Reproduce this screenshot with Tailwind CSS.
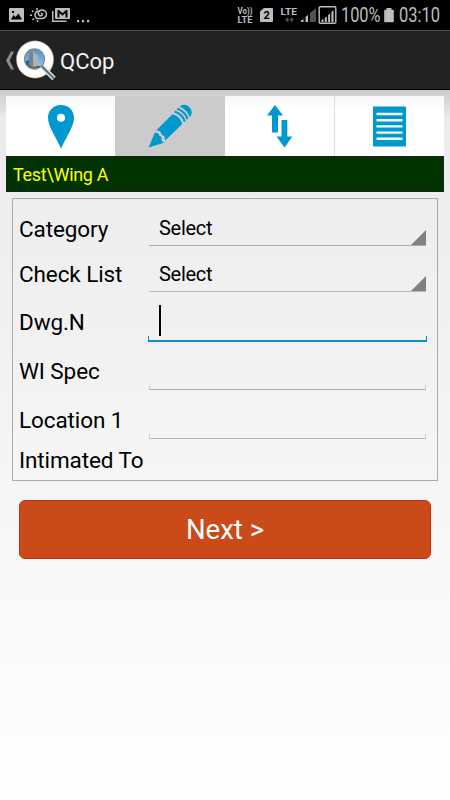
<!DOCTYPE html>
<html lang="en">
<head>
<meta charset="utf-8">
<title>QCop</title>
<script src="https://cdn.jsdelivr.net/npm/@tailwindcss/browser@4"></script>
</head>
<body class="w-[450px] h-[800px] overflow-hidden flex flex-col bg-white font-['Roboto',sans-serif] text-black">
<header class="h-[90px] shrink-0 flex flex-col bg-black">
  <div class="h-[30px] flex items-center justify-between text-[#bdbdbd]">
    <svg width="96" height="30" viewBox="0 0 96 30" fill="#bdbdbd">
      <path fill-rule="evenodd" d="M10 8h13q1 0 1 1v12q0 1-1 1h-13q-1 0-1-1v-12q0-1 1-1zM11 19.500h11l-3.500-6-3 3.500-2-2zM12 11v2h2v-2z"/>
      <g fill="none" stroke="#bdbdbd" stroke-width="1.500">
        <path d="M40 11.300a3.300 3.300 0 1 0-2.500 7.200h5a4.300 4.300 0 1 0-4-6.500c-.8 2.500 1 4 2.500 3.800 1.800-.3 1.700-2.500-.2-2.500"/>
        <path stroke-dasharray="2 2" d="M32 10.500l1.500 1.500M37 8v2M30 15.200h2.200M32.500 20l1.500-1.500M37.500 20v2"/>
      </g>
      <path d="M52 11h1.500v9.500h13V22H52z"/>
      <path fill-rule="evenodd" d="M56 8h13q1 0 1 1v9q0 1-1 1h-13q-1 0-1-1v-9q0-1 1-1zM57.500 10v7.500h2v-4.500l3 2.700 3-2.700v4.500h2v-7.500h-1.500l-3.500 3-3.500-3z"/>
      <path d="M77 20h2.200v2.200H77zM82 20h2.200v2.200H82zM87 20h2.200v2.200H87z"/>
    </svg>
    <svg width="218" height="30" viewBox="232 0 218 30" fill="#bdbdbd" font-family="Roboto, sans-serif">
      <g font-weight="700">
        <text x="237.500" y="14" font-size="8.500" textLength="15" lengthAdjust="spacingAndGlyphs">Vo))</text>
        <text x="237.500" y="22.700" font-size="8.500" textLength="15" lengthAdjust="spacingAndGlyphs">LTE</text>
        <path d="M264 8h8q1 0 1 1v12q0 1-1 1h-11q-1 0-1-1v-9.500z"/>
        <text x="263.500" y="19.300" font-size="11" fill="#000">2</text>
        <text x="280.500" y="15" font-size="9.500" textLength="16.500" lengthAdjust="spacingAndGlyphs">LTE</text>
      </g>
      <path fill="#555" d="M287.300 22l-2.500-2.500h1.700V17.500h1.600v2h1.700zM291.800 17.500l2.300 2.500h-1.600v2h-1.600v-2h-1.600z"/>
      <path d="M301 22v-1.500l2.500-1.500v3zM305.500 22v-5l2.500-2V22z"/>
      <path fill="#505050" d="M310 22v-9l6-5v14z"/>
      <rect x="319.200" y="6.700" width="16.600" height="16.500" rx="1" fill="none" stroke="#bdbdbd" stroke-width="1.400"/>
      <path d="M321.500 22v-2l2-1v3zM324.800 22v-4l2-1.500V22zM328.100 22v-7l2-1.500V22zM331.400 22V12l2.100-2v12z"/>
      <text x="341" y="22.200" font-size="20" textLength="39.500" lengthAdjust="spacingAndGlyphs">100%</text>
      <path d="M386.500 8h5v1.700h1.500q.8 0 .8.800v11q0 .8-.8.800h-8q-.8 0-.8-.8v-11q0-.8.800-.8h1.500z"/>
      <text x="399" y="22.200" font-size="20" textLength="41" lengthAdjust="spacingAndGlyphs">03:10</text>
    </svg>
  </div>
  <div class="h-[59px] border-t border-[#4a4a4a] bg-[#222] flex items-center">
    <svg class="shrink-0" width="59" height="58" viewBox="0 31 59 58">
      <defs>
        <linearGradient id="sky" x2="0" y2="1"><stop stop-color="#4f8fc8"/><stop offset="1" stop-color="#9ccbea"/></linearGradient>
        <clipPath id="lens"><circle cx="34.500" cy="59" r="9.500"/></clipPath>
      </defs>
      <path d="M11 51.500h3l-4.300 9 4.300 9h-3l-5-9z" fill="#8c8c8c"/>
      <circle cx="35" cy="59.500" r="18.700" fill="#fff" stroke="#9a6a42" stroke-width=".5"/>
      <path d="M42 66.500l12 12" stroke="#dededb" stroke-width="5"/>
      <path d="M41.500 66l12.500 12.500" stroke="#477184" stroke-width="1.800"/>
      <circle cx="34.500" cy="59" r="10" fill="url(#sky)" stroke="#7e8d97" stroke-width="1.300"/>
      <g clip-path="url(#lens)"><path d="M24 62l5-2v8h-5z" fill="#1769a6"/><path d="M29 70V56q1-4 4-5 5 4 5 19z" fill="#77838c"/><path d="M33 70V51l5 5 1 14z" fill="#a7b3bd"/><path d="M24 66h22v4H24z" fill="#49503b"/><path d="M31 66h6v1.500h-6z" fill="#a78455"/></g>
    </svg>
    <h1 class="text-[22px] leading-7 text-[#f3f3f3] pl-[1px] pt-[3px]">QCop</h1>
  </div>
</header>
<main class="grow px-[6px] pt-[6px] bg-linear-to-b from-[#cbcbcb] from-0% via-[#ebebeb] via-[4%] to-white">
  <nav class="h-[60px] flex bg-linear-to-b from-[#f8f8f8] to-white to-25%">
    <div class="w-[109px] flex justify-center items-center"><svg width="28" height="46" viewBox="0 0 28 46"><path fill="#0099cf" fill-rule="evenodd" d="M14 2C6.500 2 1 7.500 1 14.500c0 9 7 18 13 31 6-13 13-22 13-31C27 7.500 21.500 2 14 2zM14 10.800a4 4 0 1 1 0 8 4 4 0 0 1 0-8z"/></svg></div>
    <div class="w-[110px] flex justify-center items-center bg-[#cbcbcb]"><svg width="46" height="46" viewBox="147 103 46 46"><path fill="#0099cf" d="M148.700 147.500l6-14.700c2.800-.6 4.500.8 4.700 3.200 2.200.5 2.700 2 2 4.600l2.600 2.200zM156.300 130.300L172.500 114.200c5.500 1.800 8.500 5 9.700 9.700L165 140.800c.2-3.500-.7-5.500-3.300-6-.2-2.500-2.200-4.400-5.400-4.500zM179.500 106.700c4.500-4.200 9.500-1 11.200 2.300 1.800 3.700 1 6.500-1.200 8-1.500-5-4.700-8.500-10-10.300z"/><path fill="none" stroke="#0099cf" stroke-width="2" d="M177.200 108.800c5.300 1.700 8.700 5 10.300 10.300M174.500 111.500c5.300 1.700 8.700 5 10.300 10.300"/></svg></div>
    <div class="w-[109px] flex justify-center items-center"><svg width="28" height="46" viewBox="266 103 28 46" fill="#0099cf"><path d="M275 105l8 10.500h-5v17h-6v-17h-5zM281.500 120h5.800v16.500h5L284.500 147.500l-8-11h5z"/></svg></div>
    <div class="grow border-l border-[#dedede] flex justify-center items-center"><svg class="mr-[1px]" width="33" height="41" viewBox="0 0 33 41"><path fill="#0099cf" d="M0 .5h33v40H0z"/><path stroke="#f5fbfd" stroke-width="2.400" d="M3.500 8h26M3.500 14.200h26M3.500 20.400h26M3.500 26.600h26M3.500 32.800h26"/></svg></div>
  </nav>
  <div class="h-9 border border-[#1b271b] bg-[#003300] text-[#ff0] text-[18px] leading-[36px] pl-[6px] tracking-[-0.3px]">Test\Wing A</div>
  <form class="mx-[6px] mt-[6px] h-[283px] border border-[#ababab] pl-[6px] text-[22.5px] tracking-[-0.1px]">
    <div class="h-[47px] flex"><label class="w-[130px] leading-[60px]">Category</label>
      <div class="w-[277px] h-[47px] border-b border-[#ababab] flex justify-between items-end"><span class="text-[20px] leading-[34px] pl-[10px] tracking-[-0.3px]">Select</span><svg width="15" height="15" viewBox="0 0 15 15"><path d="M15 0v15H0z" fill="#808080"/></svg></div></div>
    <div class="h-[46px] flex"><label class="w-[130px] leading-[57px]">Check List</label>
      <div class="w-[277px] border-b border-[#b8b8b8] flex justify-between items-end"><span class="text-[20px] leading-[34px] pl-[10px] tracking-[-0.3px]">Select</span><svg width="15" height="15" viewBox="0 0 15 15"><path d="M15 0v15H0z" fill="#808080"/></svg></div></div>
    <div class="h-[50px] flex items-end"><label class="w-[129px] leading-[40px]">Dwg.N</label>
      <div class="w-[279px] h-[37px] flex flex-col justify-between"><i class="ml-[11px] w-[2px] h-[31px] bg-black"></i><div class="h-[6px] border border-t-0 border-b-2 border-[#128bc9]"></div></div></div>
    <div class="h-[48px] flex items-end"><label class="w-[130px] leading-[38px]">WI Spec</label><div class="w-[277px] h-[5px] border border-t-0 border-[#ababab] border-x-[#cfcfcf]"></div></div>
    <div class="h-[49px] flex items-end"><label class="w-[130px] leading-[38px]">Location 1</label><div class="w-[277px] h-[5px] border border-t-0 border-[#b5b5b5] border-x-[#cfcfcf]"></div></div>
    <div class="leading-[42px]">Intimated To</div>
  </form>
  <button class="block mt-[19px] ml-[13px] w-[412px] h-[59px] rounded-[6px] border border-[#c9300f] bg-[#ca4b19] text-white text-[27.5px] leading-[57px]">Next &gt;</button>
</main>
</body>
</html>
